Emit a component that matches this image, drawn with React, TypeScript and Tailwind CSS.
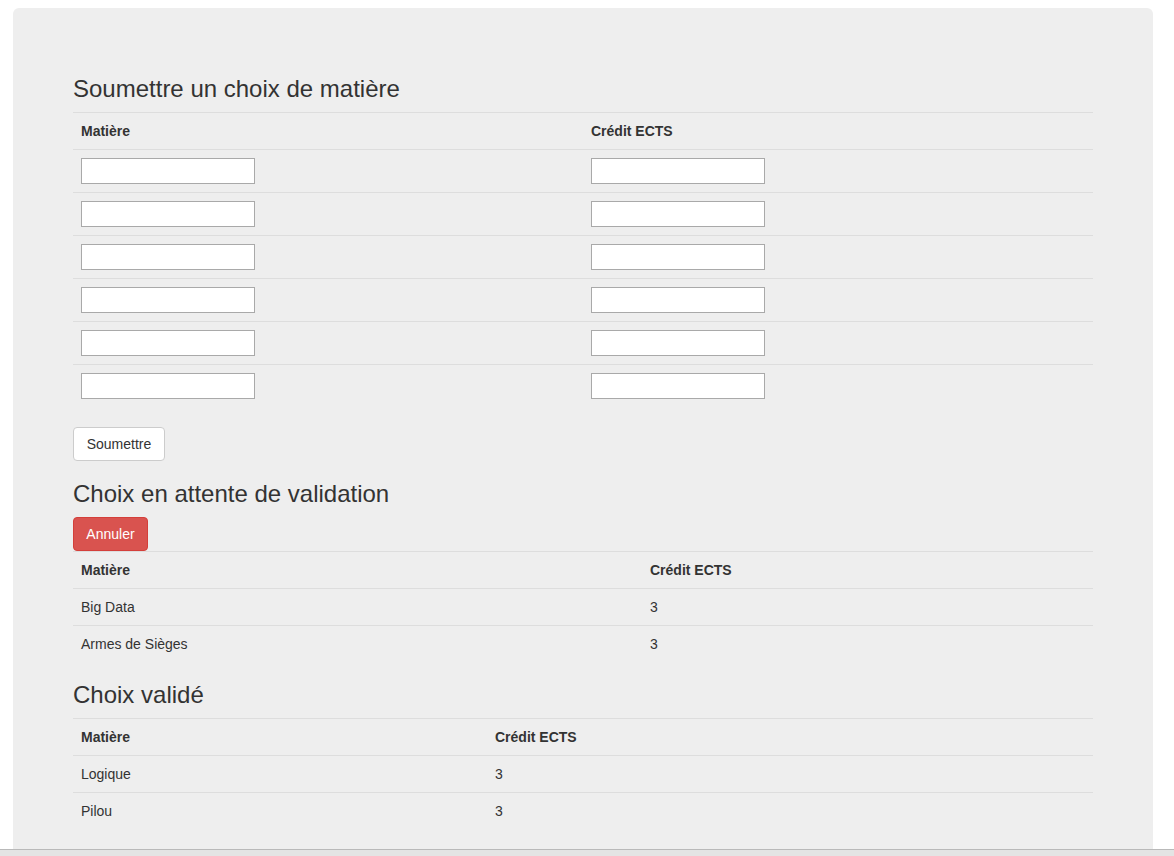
const pending = [
  { name: 'Big Data', ects: '3' },
  { name: 'Armes de Sièges', ects: '3' },
]

const validated = [
  { name: 'Logique', ects: '3' },
  { name: 'Pilou', ects: '3' },
]

function Heading({ children }: { children: React.ReactNode }) {
  return <h3 className="mt-5 mb-2.5 text-[24px] leading-[26px] font-normal text-[#333]">{children}</h3>
}

function HeadRow({ split }: { split: string }) {
  return (
    <tr className="border-t border-[#ddd]">
      <th className={`${split} p-2 text-left text-[14px] leading-5 font-bold`}>Matière</th>
      <th className="p-2 text-left text-[14px] leading-5 font-bold">Crédit ECTS</th>
    </tr>
  )
}

function ListTable({ rows, split }: { rows: { name: string; ects: string }[]; split: string }) {
  return (
    <table className="w-full border-collapse mb-5">
      <thead>
        <HeadRow split={split} />
      </thead>
      <tbody>
        {rows.map((r) => (
          <tr key={r.name} className="border-t border-[#ddd]">
            <td className="p-2 text-[14px] leading-5">{r.name}</td>
            <td className="p-2 text-[14px] leading-5">{r.ects}</td>
          </tr>
        ))}
      </tbody>
    </table>
  )
}

export default function App() {
  const inputs = [0, 1, 2, 3, 4, 5]
  return (
    <div
      className="min-h-[856px] bg-white pt-2 text-[#333]"
      style={{ fontFamily: '"Liberation Sans", Arial, sans-serif' }}
    >
      <div className="ml-[13px] w-[1140px] rounded-md bg-[#eee] px-[60px] pt-12 pb-12">
        <Heading>Soumettre un choix de matière</Heading>
        <form>
          <table className="w-full border-collapse mb-5">
            <thead>
              <HeadRow split="w-[510px]" />
            </thead>
            <tbody>
              {inputs.map((i) => (
                <tr key={i} className="border-t border-[#ddd]">
                  <td className="p-2">
                    <input
                      type="text"
                      className="block h-[26px] w-[174px] border border-[#a9a9a9] bg-white px-0.5 text-[13px]"
                    />
                  </td>
                  <td className="p-2">
                    <input
                      type="text"
                      className="block h-[26px] w-[174px] border border-[#a9a9a9] bg-white px-0.5 text-[13px]"
                    />
                  </td>
                </tr>
              ))}
            </tbody>
          </table>
          <button
            type="button"
            className="block h-[34px] w-[92px] rounded border border-[#ccc] bg-white text-[14px] leading-5 text-[#333]"
          >
            Soumettre
          </button>
        </form>

        <Heading>Choix en attente de validation</Heading>
        <button
          type="button"
          className="block h-[34px] w-[75px] rounded border border-[#d43f3a] bg-[#d9534f] text-[14px] leading-5 text-white"
        >
          Annuler
        </button>
        <ListTable rows={pending} split="w-[569px]" />

        <Heading>Choix validé</Heading>
        <ListTable rows={validated} split="w-[414px]" />
      </div>

      {/* browser scrollbar strip */}
      <div className="fixed bottom-0 left-0 right-0 h-[7px] border-t border-[#b9b9b9] bg-[#e4e4e4]" />
    </div>
  )
}
